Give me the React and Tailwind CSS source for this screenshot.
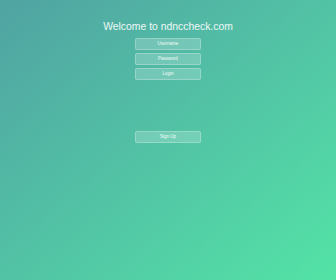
export default function App() {
  return (
    <div
      className="w-[336px] h-[280px] overflow-hidden bg-linear-to-br from-[#50a3a2] to-[#53e3a6] flex flex-col items-center"
      style={{ fontFamily: '"Liberation Sans", Arial, sans-serif' }}
    >
      <h1 className="mt-[20px] text-[10.4px] leading-[14px] font-light text-white/90">
        Welcome to ndnccheck.com
      </h1>
      <div className="mt-[4px] flex flex-col gap-[3px] w-[66px]">
        <div className="h-[12px] rounded-[2px] border border-white/25 bg-white/20 flex items-center justify-center text-[4.5px] text-white/90">
          Username
        </div>
        <div className="h-[12px] rounded-[2px] border border-white/25 bg-white/20 flex items-center justify-center text-[4.5px] text-white/90">
          Password
        </div>
        <div className="h-[12px] rounded-[2px] border border-white/25 bg-white/20 flex items-center justify-center text-[4.5px] text-white/90">
          Login
        </div>
      </div>
      <div className="mt-[51px] w-[66px] h-[12px] rounded-[2px] border border-white/25 bg-white/20 flex items-center justify-center text-[4.5px] text-white/90">
        Sign Up
      </div>
    </div>
  );
}
